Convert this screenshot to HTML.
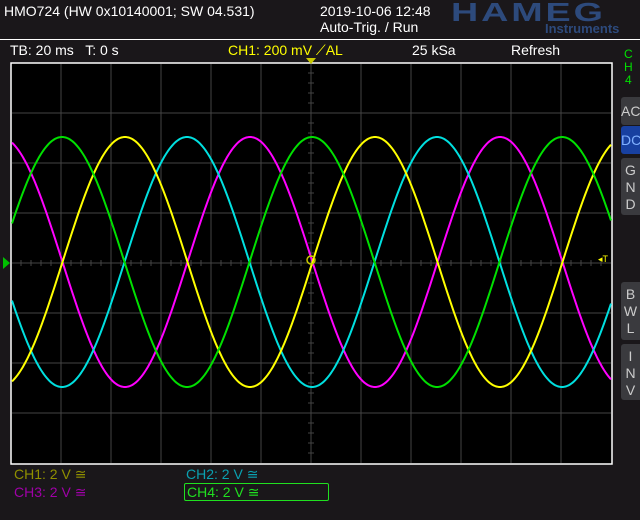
<html><head><style>
body{margin:0;width:640px;height:520px;background:#1a171a;font-family:"Liberation Sans",sans-serif;position:relative;overflow:hidden;color:#fff}
.t{position:absolute;font-size:14px;white-space:nowrap}
.btn{position:absolute;left:621px;width:19px;background:#3a3a3e;border-radius:3px 0 0 3px;color:#ccc;font-size:14px;text-align:center;line-height:17px}
</style></head><body>
<div class="t" style="left:4px;top:3px">HMO724 (HW 0x10140001; SW 04.531)</div>
<div class="t" style="left:320px;top:3px">2019-10-06 12:48</div>
<div class="t" style="left:320px;top:19px">Auto-Trig. / Run</div>
<div class="t" style="left:451px;top:-3px;font-size:26px;font-weight:bold;color:#2d4a7c;letter-spacing:2px;transform:scaleX(1.45);transform-origin:left">HAMEG</div>
<div class="t" style="left:545px;top:21px;font-size:13px;font-weight:bold;color:#2d4a7c">Instruments</div>
<div style="position:absolute;left:0;top:39px;width:640px;height:1px;background:#fff"></div>
<div class="t" style="left:10px;top:42px">TB: 20 ms &nbsp; T: 0 s</div>
<div class="t" style="left:228px;top:42px;color:#ffff00">CH1: 200 mV ⟋AL</div>
<div class="t" style="left:412px;top:42px">25 kSa</div>
<div class="t" style="left:511px;top:42px">Refresh</div>
<div class="t" style="left:624px;top:48px;color:#00e000;font-size:12px;line-height:13px;text-align:center">C<br>H<br>4</div>
<div class="btn" style="top:97px;height:28px;line-height:28px">AC</div>
<div class="btn" style="top:126px;height:28px;line-height:28px;background:#1840a0;color:#80b0ff">DC</div>
<div class="btn" style="top:158px;height:57px;padding-top:4px;box-sizing:border-box">G<br>N<br>D</div>
<div class="btn" style="top:282px;height:58px;padding-top:4px;box-sizing:border-box">B<br>W<br>L</div>
<div class="btn" style="top:344px;height:56px;padding-top:4px;box-sizing:border-box">I<br>N<br>V</div>
<svg style="position:absolute;left:0;top:0" width="640" height="520" id="s">
<rect x="11" y="63" width="601" height="401" fill="#000" stroke="#fff" stroke-width="1.5"/>
<g id="g" stroke="#444" stroke-width="1"></g>
<polygon points="306,58 316,58 311,64" fill="#c8c800"/>
<polygon points="3,257 3,269 10,263" fill="#00c000"/>
<text x="598" y="262" fill="#ffff00" font-size="9" font-family="Liberation Sans">◂T</text>
<circle cx="311" cy="260" r="4" fill="none" stroke="#c8c800" stroke-width="1.5"/>
</svg>
<div class="t" style="left:14px;top:466px;color:#909000">CH1: 2 V ≅</div>
<div class="t" style="left:186px;top:466px;color:#0aa0b0">CH2: 2 V ≅</div>
<div class="t" style="left:14px;top:484px;color:#a000a8">CH3: 2 V ≅</div>
<div style="position:absolute;left:184px;top:483px;width:143px;height:16px;border:1px solid #20e020;border-radius:2px"></div>
<div class="t" style="left:187px;top:484px;color:#20e020">CH4: 2 V ≅</div>
<script>
var s=document.getElementById('s'),g=document.getElementById('g'),ns='http://www.w3.org/2000/svg';
function L(x1,y1,x2,y2){var l=document.createElementNS(ns,'line');l.setAttribute('x1',x1);l.setAttribute('y1',y1);l.setAttribute('x2',x2);l.setAttribute('y2',y2);g.appendChild(l);}
for(var x=61;x<611;x+=50)L(x,64,x,463);
for(var y=113;y<463;y+=50)L(12,y,611,y);
for(var x=21;x<611;x+=10)L(x,260,x,266);
for(var y=73;y<463;y+=10)L(308,y,314,y);
var cs=[['#00e000',62],['#ffff00',125],['#00e0e0',187],['#ff00ff',250]];
cs.forEach(function(c){var d='';for(var x=12;x<=611;x++){var y=262-125*Math.cos(2*Math.PI*(x-c[1])/250);d+=(x==12?'M':'L')+x+','+y.toFixed(1);}
var p=document.createElementNS(ns,'path');p.setAttribute('d',d);p.setAttribute('stroke',c[0]);p.setAttribute('stroke-width','2');p.setAttribute('fill','none');s.insertBefore(p,s.children[2]);});
</script>
</body></html>
